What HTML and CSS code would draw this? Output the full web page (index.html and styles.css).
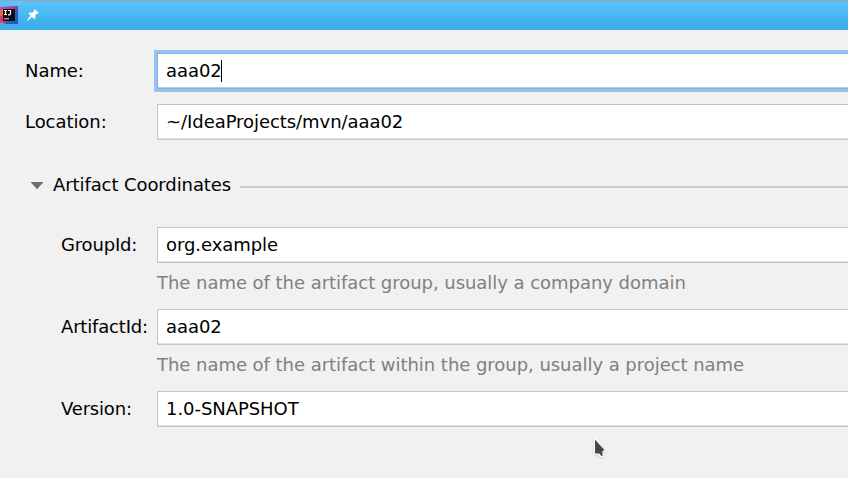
FILE: index.html
```html
<!DOCTYPE html>
<html lang="en">
<head>
<meta charset="utf-8">
<title>New Project</title>
<link rel="stylesheet" href="styles.css">
</head>
<body>
<header class="titlebar">
  <svg class="app-icon" width="18" height="18" viewBox="0 0 18 18">
    <defs><linearGradient id="g" x1="0" y1="0" x2="1" y2="1"><stop offset="0" stop-color="#c8509b"/><stop offset=".45" stop-color="#a03b98"/><stop offset=".7" stop-color="#245fc4"/><stop offset="1" stop-color="#1b58b8"/></linearGradient></defs>
    <path fill="url(#g)" d="M0 1L18 0V18H6L0 15z"/>
    <path fill="#f26b3c" d="M0 5l3-2v6l-3 2z"/>
    <path fill="#e9306a" d="M0 9l3 3 3 6-6-2z"/>
    <path fill="#100a0e" d="M3 3h12v12H3z"/>
    <path fill="none" stroke="#fff" stroke-width="1.2" d="M4 4.500h3M5.500 4.500v4M4 8.500h3M8 4.500h2.500v3q0 1.300-1.300 1.300H8"/>
    <path fill="#999" d="M4 12h5v1.500H4z"/>
  </svg>
  <svg class="pin" width="12" height="12" viewBox="0 0 12 12">
    <path fill="#fff" d="M7.500 0L12 4 10.800 4.800 10 4.500 8.200 6.800 8.500 9 7.500 10 5 8 .7 11.500 0 11 3.500 6.700 1.500 4.500 2.500 3.500 5 3.700 7.300 1.800 7 1z"/>
  </svg>
</header>
<main class="form">
  <div class="row"><label class="label">Name:</label><div class="field focused">aaa02<span class="caret"></span></div></div>
  <div class="row"><label class="label">Location:</label><div class="field">~/IdeaProjects/mvn/aaa02</div></div>
  <div class="section">
    <svg class="arrow" width="14" height="8" viewBox="0 0 14 8"><path fill="#6e6e6e" d="M.5 0h13L7 7.300z"/></svg>
    <span class="heading">Artifact Coordinates</span>
    <span class="rule"></span>
  </div>
  <div class="row nested"><label class="label">GroupId:</label><div class="field">org.example</div></div>
  <p class="hint">The name of the artifact group, usually a company domain</p>
  <div class="row nested"><label class="label">ArtifactId:</label><div class="field">aaa02</div></div>
  <p class="hint">The name of the artifact within the group, usually a project name</p>
  <div class="row nested"><label class="label">Version:</label><div class="field">1.0-SNAPSHOT</div></div>
</main>
<svg class="pointer" width="18" height="26" viewBox="0 0 18 26"><path fill="#484848" stroke="#fff" stroke-width="1.200" stroke-linejoin="round" d="M2.400 2L13.500 14 11 15.500V20.500H9L6.800 18H2.400z"/></svg>
</body>
</html>
```
FILE: styles.css
```css
* { box-sizing: border-box; }
body {
  margin: 0;
  height: 478px;
  overflow: hidden;
  background: #f1f1f1;
  color: #000;
  font: 18px/24px "DejaVu Sans", sans-serif;
  white-space: nowrap;
}
.titlebar {
  height: 30px;
  padding-bottom: 1px;
  border-top: 1px solid #a3a3a3;
  background: linear-gradient(#5ac4ff, #3daee9 85%);
  display: flex;
  align-items: center;
  gap: 9px;
}
.app-icon, .pin, .arrow { display: block; flex: none; }
.pin { margin-bottom: 1px; }
.form { padding: 23px 0 0 25px; }
.row { display: flex; align-items: center; height: 36px; margin-bottom: 15px; }
.label { width: 132px; flex: none; letter-spacing: -0.06px; }
.nested { padding-left: 36px; margin-bottom: 0; }
.nested .label { width: 96px; letter-spacing: -0.18px; }
.field {
  flex: 1;
  height: 36px;
  display: flex;
  align-items: center;
  padding-left: 8px;
  background: #fff;
  border: 1px solid #c4c4c4;
  border-right: 0;
  box-shadow: inset 0 -1px #e2e2e2;
  letter-spacing: -0.06px;
}
.focused { border-color: #87afda; box-shadow: 0 0 0 3px #97c3f3, inset 0 -1px #b5cde6; }
.caret { width: 1px; height: 22px; margin-left: -1px; background: #000; }
.section { display: flex; align-items: center; height: 24px; margin: 33px 0 30px; padding-left: 5px; }
.heading { letter-spacing: -0.09px; }
.arrow { margin: 2px 9px 0 0; }
.rule { flex: 1; height: 2px; margin: 3px 0 0 9px; background: #cdcdcd; }
.hint { margin: 0 0 0 132px; height: 46px; padding-top: 8px; color: #808080; letter-spacing: -0.04px; }
.pointer { position: absolute; left: 592px; top: 436px; filter: drop-shadow(0 1px 1px rgba(0, 0, 0, .15)); }
```
